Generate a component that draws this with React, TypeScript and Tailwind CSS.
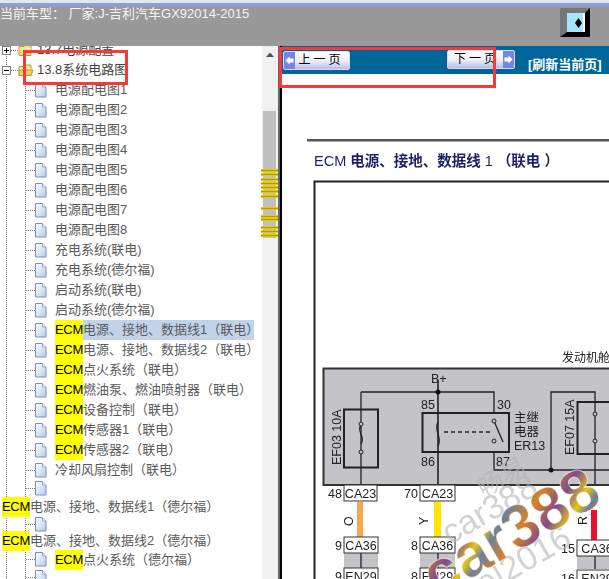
const L = "\uFF08";
const R = "\uFF09";

const leafRows: { text: string; ecm?: boolean; selected?: boolean }[] = [
  { text: "电源配电图1" },
  { text: "电源配电图2" },
  { text: "电源配电图3" },
  { text: "电源配电图4" },
  { text: "电源配电图5" },
  { text: "电源配电图6" },
  { text: "电源配电图7" },
  { text: "电源配电图8" },
  { text: "充电系统(联电)" },
  { text: "充电系统(德尔福)" },
  { text: "启动系统(联电)" },
  { text: "启动系统(德尔福)" },
  { text: `电源、接地、数据线1${L}联电${R}`, ecm: true, selected: true },
  { text: `电源、接地、数据线2${L}联电${R}`, ecm: true },
  { text: `点火系统${L}联电${R}`, ecm: true },
  { text: `燃油泵、燃油喷射器${L}联电${R}`, ecm: true },
  { text: `设备控制${L}联电${R}`, ecm: true },
  { text: `传感器1${L}联电${R}`, ecm: true },
  { text: `传感器2${L}联电${R}`, ecm: true },
  { text: `冷却风扇控制${L}联电${R}` },
];

const scrollMarks = [169, 173, 178, 182, 186, 190, 195, 207, 215, 218, 226, 230, 234];

function FileIcon() {
  return (
    <svg width="12" height="15" viewBox="0 0 12 15" className="shrink-0">
      <defs>
        <linearGradient id="page" x1="0" y1="0" x2="1" y2="1">
          <stop offset="0" stopColor="#ffffff" />
          <stop offset="1" stopColor="#b4cdf0" />
        </linearGradient>
      </defs>
      <path d="M0.5 0.5H7.5L11 4V14H0.5Z" fill="url(#page)" stroke="#7d8fb8" />
      <path d="M7.5 0.5V4H11" fill="#e8eefa" stroke="#9aa9c8" />
    </svg>
  );
}

function FolderIcon({ open }: { open?: boolean }) {
  return (
    <svg width="16" height="14" viewBox="0 0 16 14" className="shrink-0">
      <path d="M1 3.5H6L7 2H13V12.5H1Z" fill="#fbe27c" stroke="#b89a3c" />
      <path d="M1.5 6H13" stroke="#fff6c4" />
      {open && <path d="M1 7H15L13 12.5H1Z" fill="#f5c95a" stroke="#b89a3c" />}
    </svg>
  );
}

function ExpandBox({ sign }: { sign: "+" | "-" }) {
  return (
    <span className="relative block w-[9px] h-[9px] border border-[#808080] bg-white">
      <span className="absolute left-[1px] top-[3px] w-[5px] h-[1px] bg-black" />
      {sign === "+" && <span className="absolute left-[3px] top-[1px] w-[1px] h-[5px] bg-black" />}
    </span>
  );
}

function Ecm() {
  return <span className="bg-[#ffff00] text-black h-[20px] leading-[20px] inline-block tracking-[-0.3px]">ECM</span>;
}

function Connector9() {
  return <span className="w-[9px] shrink-0 border-t border-dotted border-[#777]" />;
}

function LeafIconRow({ height }: { height: string }) {
  return (
    <div className={`flex items-center pl-[26px] ${height}`}>
      <Connector9 />
      <FileIcon />
    </div>
  );
}

function Tree() {
  return (
    <div className="relative flex-1 h-full overflow-hidden bg-white text-[13px] text-[#5a5a5a]">
      <span className="absolute left-[6px] top-[8px] bottom-0 border-l border-dotted border-[#777]" />
      <span className="absolute left-[25px] top-[36px] bottom-0 border-l border-dotted border-[#777]" />
      <div className="relative -mt-[6px]">
        <div className="flex items-center h-[20px] pl-[2px]">
          <ExpandBox sign="+" />
          <span className="w-[7px] border-t border-dotted border-[#777]" />
          <FolderIcon />
          <span className="ml-[3px] text-[#444]">13.7电源配置</span>
        </div>
        <div className="flex items-center h-[20px] pl-[2px]">
          <ExpandBox sign="-" />
          <span className="w-[7px] border-t border-dotted border-[#777]" />
          <FolderIcon open />
          <span className="ml-[3px] text-[#444]">13.8系统电路图</span>
        </div>
        {leafRows.map((row) => (
          <div key={row.text} className="flex items-center h-[20px] pl-[26px]">
            <Connector9 />
            <FileIcon />
            <span
              className={`ml-[8px] shrink-0 h-[20px] leading-[20px] whitespace-nowrap ${row.selected ? "bg-[#c2d2ea] w-[199px]" : ""}`}
            >
              {row.ecm && <Ecm />}
              {row.text}
            </span>
          </div>
        ))}
        <LeafIconRow height="h-[17px]" />
        <div className="relative h-[20px] leading-[20px] pl-[2px] whitespace-nowrap">
          <Ecm />
          {`电源、接地、数据线1${L}德尔福${R}`}
        </div>
        <LeafIconRow height="h-[14px]" />
        <div className="relative h-[20px] leading-[20px] pl-[2px] whitespace-nowrap">
          <Ecm />
          {`电源、接地、数据线2${L}德尔福${R}`}
        </div>
        <div className="flex items-center h-[17px] pl-[26px]">
          <Connector9 />
          <FileIcon />
          <span className="ml-[8px] whitespace-nowrap">
            <Ecm />
            {`点火系统${L}德尔福${R}`}
          </span>
        </div>
        <LeafIconRow height="h-[18px]" />
      </div>
    </div>
  );
}

function Scrollbar() {
  return (
    <div className="relative w-[16px] h-full bg-[#f0f0f0] shrink-0">
      <svg width="10" height="6" viewBox="0 0 10 6" className="absolute left-[3px] top-[6px]">
        <path d="M5 0.5L9 5H1Z" fill="#505050" />
      </svg>
      <div className="absolute left-[1px] right-[2px] top-[65px] h-[127px] bg-[#c0c0c0]" />
      {scrollMarks.map((y) => (
        <span
          key={y}
          className="absolute -left-[1px] right-0 h-[3px] bg-[#b39b00] border-y border-[#e6c800]"
          style={{ top: y - 46 }}
        />
      ))}
    </div>
  );
}

function NavButton({ label, dir, className }: { label: string; dir: "prev" | "next"; className: string }) {
  const arrow = (
    <span className="flex items-center justify-center w-[11px] self-stretch bg-[#7485e6]">
      <svg width="9" height="9" viewBox="0 0 9 9">
        <path d={dir === "prev" ? "M0.5 4.5L4.5 0.5V2.5H8.5V6.5H4.5V8.5Z" : "M8.5 4.5L4.5 0.5V2.5H0.5V6.5H4.5V8.5Z"} fill="#ffffff" />
      </svg>
    </span>
  );
  return (
    <div
      className={`flex items-center h-[19px] rounded-[2px] overflow-hidden border border-[#d6dcf5] bg-gradient-to-b from-[#ffffff] via-[#f0f0fc] to-[#b9bdea] text-[12px] text-black ${className}`}
    >
      {dir === "prev" && arrow}
      <span className="flex-1 text-center tracking-[3px] leading-[17px] whitespace-nowrap">{label}</span>
      {dir === "next" && arrow}
    </div>
  );
}

function Connector({ x, y, w, label, pin }: { x: number; y: number; w: number; label: string; pin: string }) {
  return (
    <g>
      <rect x={x} y={y} width={w} height={16} fill="#ffffff" stroke="#333" strokeWidth="1" />
      <text x={x + w / 2} y={y + 13} textAnchor="middle" fontSize="12.5" fill="#222">
        {label}
      </text>
      <text x={x - 2} y={y + 13} textAnchor="end" fontSize="12.5" fill="#222">
        {pin}
      </text>
    </g>
  );
}

function Diagram() {
  return (
    <svg viewBox="282 74 327 505" width="327" height="505" className="block blur-[0.3px]">
      <defs>
        <linearGradient id="mark" gradientUnits="userSpaceOnUse" x1="470" y1="470" x2="505" y2="530" spreadMethod="repeat">
          <stop offset="0" stopColor="#6f7f98" />
          <stop offset="0.3" stopColor="#d98226" />
          <stop offset="0.6" stopColor="#7d4c8c" />
          <stop offset="0.85" stopColor="#e6c41c" />
          <stop offset="1" stopColor="#6f7f98" />
        </linearGradient>
      </defs>

      <rect x="307" y="139" width="302" height="2.5" fill="#555" />
      <text x="314" y="166" fontSize="14.5" fill="#1c1f6b">
        ECM <tspan fontWeight="700">电源、接地、数据线</tspan> 1 <tspan fontWeight="700">{`${L}联电 ${R}`}</tspan>
      </text>

      <path d="M314.5 579V181.5H609" fill="none" stroke="#222" strokeWidth="2" />
      <text x="562" y="362" fontSize="12" fill="#222">发动机舱</text>

      <rect x="323.5" y="368.5" width="290" height="116.5" fill="#c3c3c8" stroke="#333" strokeWidth="2" />

      <g fill="none" stroke="#222" strokeWidth="1.3">
        <path d="M361 392H494V413" />
        <path d="M361 392V485" />
        <path d="M438 380V485" strokeWidth="1.6" />
        <path d="M494 452V470H609" />
        <path d="M551 470V392H595V485" />
        <path d="M361 425C356 432 366 436 361 444" />
        <path d="M438 422C433 430 443 438 438 446" />
        <path d="M494 421L503 442" />
        <path d="M444 432H490" strokeDasharray="4 3" />
      </g>
      <g fill="none" stroke="#222" strokeWidth="2">
        <rect x="344" y="409.5" width="34" height="58" />
        <rect x="422.5" y="413" width="86.5" height="39" />
        <rect x="577.5" y="402" width="40" height="52" />
      </g>
      <g fill="#c3c3c8" stroke="#222" strokeWidth="1">
        <circle cx="361" cy="424" r="2" />
        <circle cx="361" cy="452" r="2" />
        <circle cx="494" cy="421" r="2" />
        <circle cx="494" cy="441" r="2" />
        <circle cx="595" cy="414" r="2" />
        <circle cx="595" cy="441" r="2" />
      </g>
      <circle cx="438" cy="392" r="2.5" fill="#111" />
      <circle cx="551" cy="470" r="2.5" fill="#111" />

      <g fontSize="12.5" fill="#222">
        <text x="431" y="383">B+</text>
        <text x="421" y="409">85</text>
        <text x="497" y="409">30</text>
        <text x="421" y="466">86</text>
        <text x="496" y="466">87</text>
        <text x="514" y="422">主继</text>
        <text x="514" y="436">电器</text>
        <text x="514" y="450">ER13</text>
        <text transform="translate(341 465) rotate(-90)">EF03 10A</text>
        <text transform="translate(574 455) rotate(-90)">EF07 15A</text>
        <text transform="translate(353 526) rotate(-90)">O</text>
        <text transform="translate(428 525) rotate(-90)">Y</text>
        <text transform="translate(587 525) rotate(-90)">R</text>
      </g>

      <rect x="357" y="502" width="6" height="35" fill="#f5a94a" />
      <rect x="434" y="502" width="7" height="35" fill="#ffe600" />
      <rect x="591" y="510" width="6" height="30" fill="#e8102a" />

      <rect x="344" y="553" width="34" height="15" fill="#c3c3c8" />
      <rect x="420" y="553" width="35" height="15" fill="#c3c3c8" />
      <rect x="577" y="556" width="32" height="13" fill="#c3c3c8" />
      <path d="M361 553V568M438 553V568M595 556V569" stroke="#222" strokeWidth="1.3" />

      <Connector x={344} y={485} w={33} label="CA23" pin="48" />
      <Connector x={420} y={485} w={35} label="CA23" pin="70" />
      <Connector x={344} y={537} w={34} label="CA36" pin="9" />
      <Connector x={420} y={537} w={35} label="CA36" pin="8" />
      <Connector x={577} y={540} w={40} label="CA36" pin="15" />
      <Connector x={344} y={568} w={34} label="EN29" pin="9" />
      <Connector x={420} y={568} w={35} label="EN29" pin="8" />
      <Connector x={577} y={570} w={40} label="EN29" pin="16" />

      <g fill="#b5b5b5" opacity="0.6">
        <text transform="translate(484 498) rotate(-30)" fontSize="26">畅易</text>
        <text transform="translate(450 545) rotate(-30)" fontSize="34">car388</text>
        <text transform="translate(484 596) rotate(-30)" fontSize="34">e|2016</text>
      </g>
      <text
        transform="translate(437 598) rotate(-30)"
        fontSize="61"
        fontWeight="700"
        fill="url(#mark)"
        stroke="#ffffff"
        strokeOpacity="0.6"
        strokeWidth="1"
      >
        car388
      </text>
    </svg>
  );
}

export default function App() {
  return (
    <div className="relative w-[609px] h-[579px] overflow-hidden bg-white flex flex-col font-['Liberation_Sans','Noto_Sans_CJK_SC',sans-serif]">
      <div className="h-[3px] bg-[#dfe8f6]" />
      <div className="h-[3px] bg-[#8c9fe0]" />
      <div className="h-[40px] bg-[#999999] flex justify-between shrink-0">
        <span className="text-[13px] leading-[16px] text-[#f4f4f4] whitespace-nowrap">
          {"当前车型\uFF1A\u00A0厂家:J-吉利汽车GX92014-2015"}
        </span>
        <div className="mt-[2px] mr-[19px] w-[30px] h-[29px] border-[5px] border-l-[7px] border-t-[#777777] border-l-[#777777] border-r-black border-b-black">
          <div className="relative w-full h-full bg-[#a8e4fa] border-r-[2px] border-white flex items-center justify-end pr-[1px]">
            <svg width="7" height="10" viewBox="0 0 7 10">
              <path d="M3.5 0L7 5L3.5 10L0 5Z" fill="#000000" />
            </svg>
          </div>
        </div>
      </div>

      <div className="flex flex-1 min-h-0">
        <div className="flex w-[278px] h-full shrink-0">
          <Tree />
          <Scrollbar />
        </div>
        <div className="w-[2px] bg-[#666666]" />
        <div className="w-[2px] bg-black" />
        <div className="flex-1 min-w-0 bg-white">
          <div className="h-[28px] bg-[#006699] flex items-start">
            <NavButton label="上一页" dir="prev" className="w-[67px] mt-[5px] ml-[1px] pr-[2px]" />
            <NavButton label="下一页" dir="next" className="w-[68px] mt-[4px] ml-[97px] pl-[2px]" />
            <span className="ml-[13px] mt-[11px] text-[13px] leading-[15px] font-bold text-white whitespace-nowrap">
              [刷新当前页]
            </span>
          </div>
          <Diagram />
        </div>
      </div>

      <div className="absolute left-[23px] top-[50px] w-[105px] h-[35px] border-[3px] border-[#f53a3a]" />
      <div className="absolute left-[279px] top-[47px] w-[217px] h-[41px] border-[3px] border-[#f53a3a]" />
    </div>
  );
}
